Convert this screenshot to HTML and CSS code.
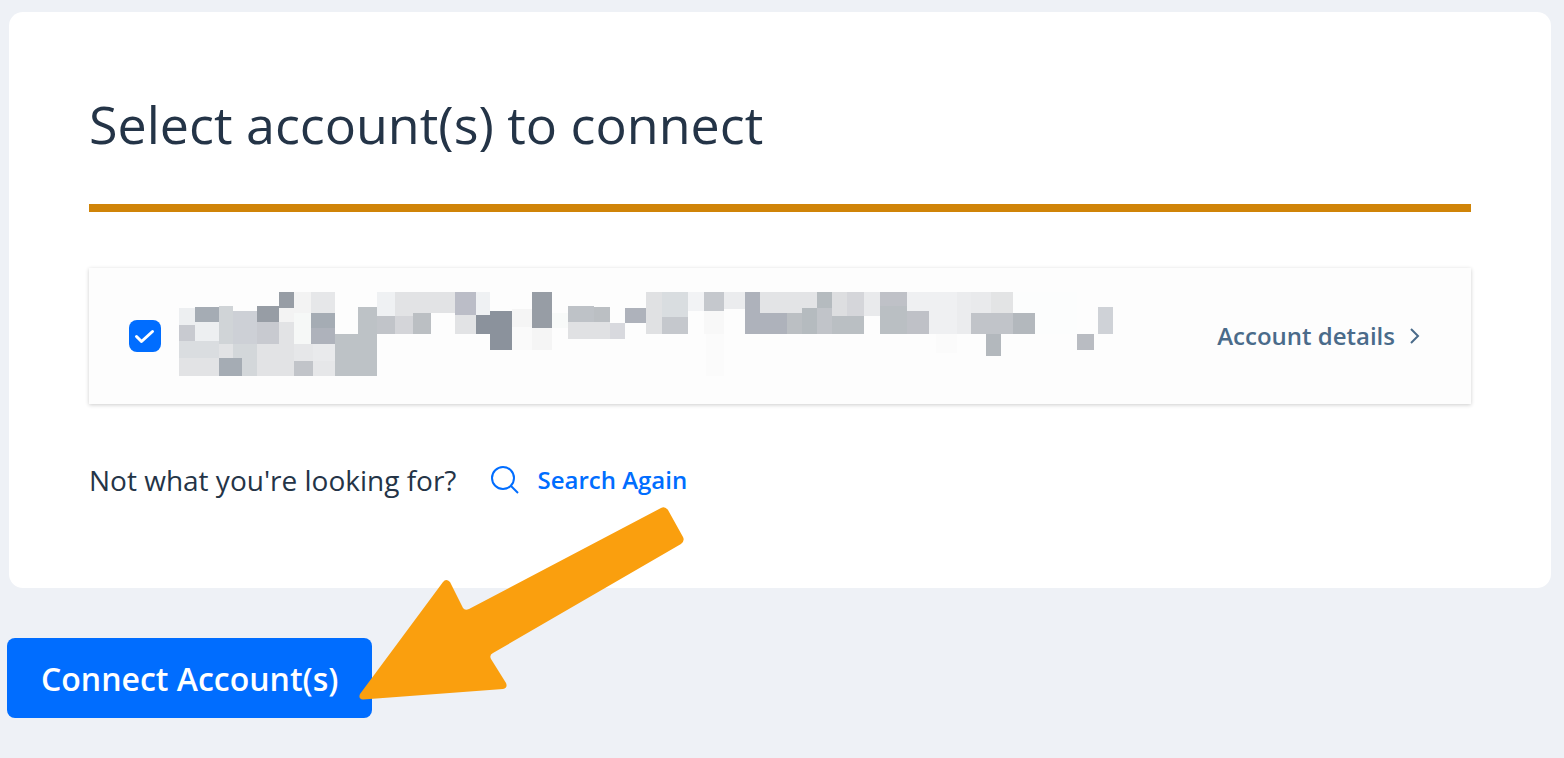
FILE: index.html
```html
<!DOCTYPE html>
<html lang="en">
<head>
<meta charset="utf-8">
<meta name="viewport" content="width=device-width, initial-scale=1">
<title>Select account(s) to connect</title>
<link rel="stylesheet" href="styles.css">
</head>
<body>
<main class="page">
  <section class="card">
    <h1 class="title">Select account(s) to connect</h1>
    <div class="account">
      <input class="account-check" type="checkbox" id="account" aria-label="Select account" checked>
      <label class="account-name" for="account">
        <svg class="mosaic" viewBox="0 0 934 88" shape-rendering="crispEdges" aria-hidden="true">
          <path fill="#edeff1" d="M0 16h16v17H0zM16 30h24v19H16z"/>
          <path fill="#a5acb4" d="M16 15h24v15H16zM132 21h24v15h-24zM40 66h23v18H40z"/>
          <path fill="#c8cad0" d="M0 33h16v16H0zM78 30h22v22H78z"/>
          <path fill="#dadde0" d="M0 49h40v17H0z"/>
          <path fill="#e2e3e5" d="M0 66h40v18H0zM40 52h14v14H40zM78 52h37v32H78zM100 30h15v22h-15z"/>
          <path fill="#d0d4d7" d="M40 14h14v38H40z"/>
          <path fill="#cdd0d6" d="M54 19h24v33H54z"/>
          <path fill="#d3d7da" d="M54 52h24v32H63V66h-9z"/>
          <path fill="#979da5" d="M78 14h22v16H78zM100 0h15v16h-15zM353 0h20v36h-20z"/>
          <path fill="#f3f3f3" d="M115 0h17v21h-17zM100 16h15v14h-15z"/>
          <path fill="#f6f8f7" d="M115 21h17v31h-17z"/>
          <path fill="#e6e7e9" d="M132 0h24v21h-24zM115 52h19v17h-19zM134 69h22v15h-22z"/>
          <path fill="#e9eaec" d="M134 52h22v17h-22z"/>
          <path fill="#aeb2bb" d="M132 36h24v16h-24zM446 16h21v15h-21zM566 0h15v21h27v21h-42z"/>
          <path fill="#c1c4c9" d="M115 69h19v15h-19zM198 24h18v18h-18zM638 16h15v26h-15zM792 21h42v21h-42z"/>
          <path fill="#bdc2c6" d="M179 15h19v69h-42V42h23z"/>
          <path fill="#eff1f3" d="M198 0h18v24h-18zM297 0h14v23h-14z"/>
          <path fill="#e2e3e5" d="M216 0h60v21h-42v3h-18zM276 23h21v19h-21z"/>
          <path fill="#d4d5d9" d="M216 24h18v18h-18z"/>
          <path fill="#bbbfc3" d="M234 21h18v21h-18zM415 15h16v15h-16zM608 21h15v21h-15z"/>
          <path fill="#bbbdc7" d="M276 0h21v23h-21z"/>
          <path fill="#8b929c" d="M297 23h14v-4h22v39h-22V42h-14z"/>
          <path fill="#f5f5f5" d="M333 17h20v18h-20zM353 36h20v22h-20z"/>
          <path fill="#fafafa" d="M333 35h20v23h-20z"/>
          <path fill="#f8faf9" d="M373 21h16v15h-16z"/>
          <path fill="#bec2c7" d="M389 14h26v16h-26z"/>
          <path fill="#e0e1e3" d="M389 30h42v17h-42zM467 0h16v42h-16z"/>
          <path fill="#d8d9de" d="M431 31h15v16h-15z"/>
          <path fill="#d9dde0" d="M483 0h26v25h-26z"/>
          <path fill="#c5c8cd" d="M483 25h26v17h-26zM525 0h20v19h-20z"/>
          <path fill="#f2f3f5" d="M509 0h16v19h-16z"/>
          <path fill="#f8f8f8" d="M525 19h20v23h-20z"/>
          <path fill="#fbfbfb" d="M527 42h18v42h-18zM757 42h21v19h-21z"/>
          <path fill="#ebecee" d="M545 0h21v17h-21z"/>
          <path fill="#e3e4e6" d="M581 0h57v16h-15v5h-42z"/>
          <path fill="#b5bbbf" d="M638 0h15v16h-15zM623 16h15v26h-15z"/>
          <path fill="#dddee0" d="M653 0h15v24h-15z"/>
          <path fill="#d5d6da" d="M668 0h17v24h-17z"/>
          <path fill="#e9eaec" d="M685 0h16v24h-16zM792 0h20v21h-20z"/>
          <path fill="#babfc3" d="M653 24h32v18h-32zM701 14h27v28h-27z"/>
          <path fill="#bfc1c7" d="M701 0h27v14h-27zM728 19h22v23h-22z"/>
          <path fill="#eff0f2" d="M728 0h50v42h-28V19h-22z"/>
          <path fill="#ebecee" d="M778 0h14v42h-14z"/>
          <path fill="#e3e4e5" d="M812 0h22v21h-22z"/>
          <path fill="#b3b8bd" d="M834 21h22v21h-22zM807 42h15v22h-15z"/>
          <path fill="#fcfdfd" d="M834 0h64v42h-42V21h-22z"/>
          <path fill="#b9bcc2" d="M898 42h17v16h-17z"/>
          <path fill="#cfd2d7" d="M919 15h15v27h-15z"/>
        </svg>
      </label>
      <a class="details" href="#details">Account details
        <svg class="chevron" viewBox="0 0 12 18" aria-hidden="true"><path d="M2 2l7 7-7 7"/></svg>
      </a>
    </div>
    <div class="retry">
      <span>Not what you're looking for?</span>
      <a class="search" href="#search">
        <svg class="search-icon" viewBox="0 0 30 30" aria-hidden="true"><circle cx="13" cy="13" r="11"/><path d="M21 21l7 7"/></svg>
        Search Again
      </a>
    </div>
  </section>
  <div class="actions">
    <button class="connect" type="button">Connect Account(s)</button>
    <svg class="arrow" viewBox="0 0 326 196" aria-hidden="true">
      <path d="M302 2Q306 0 309 4L324 31Q326 35 322 38L134 147Q130 149 132 153L147 177Q149 182 144 183L4 193.500Q-1 193 1 188L84 76Q87 72 91 76L104 102Q106 105 110 103Z"/>
    </svg>
  </div>
</main>
</body>
</html>
```
FILE: styles.css
```css
* {
  box-sizing: border-box;
}

body {
  margin: 0;
  background: #eef1f6;
  color: #243447;
  font-family: "Open Sans", "Noto Sans", sans-serif;
}

.page {
  padding: 12px 13px 40px 7px;
}

.card {
  margin-left: 2px;
  padding: 76px 80px 88px;
  border-radius: 14px;
  background: #fff;
}

.title {
  margin: 0 0 56px;
  padding-bottom: 44px;
  border-bottom: 8px solid #d08408;
  font-size: 52px;
  font-weight: 400;
  line-height: 72px;
}

.account {
  display: flex;
  align-items: center;
  height: 136px;
  padding: 0 50px 0 40px;
  background: #fdfdfd;
  box-shadow: 0 1px 4px rgba(0, 0, 0, 0.2);
}

.account-check {
  appearance: none;
  flex: none;
  width: 32px;
  height: 32px;
  margin: 0 18px 0 0;
  border-radius: 8px;
  background: #006dff url("data:image/svg+xml,%3Csvg xmlns='http://www.w3.org/2000/svg' viewBox='0 0 32 32'%3E%3Cpath d='M7.500 16.500l5 5L23.500 11.500' fill='none' stroke='white' stroke-width='3' stroke-linecap='round' stroke-linejoin='round'/%3E%3C/svg%3E");
}

.account-name {
  flex: 0 1 934px;
}

.mosaic {
  display: block;
  width: 100%;
}

.details {
  display: flex;
  align-items: center;
  gap: 14px;
  margin-left: auto;
  color: #4a6b8a;
  font-size: 24px;
  font-weight: 600;
  line-height: 32px;
  text-decoration: none;
  white-space: nowrap;
}

.chevron {
  width: 12px;
  height: 18px;
  fill: none;
  stroke: currentColor;
  stroke-width: 2;
}

.retry {
  display: flex;
  align-items: center;
  gap: 34px;
  margin-top: 56px;
  font-size: 28px;
  line-height: 40px;
}

.search {
  display: flex;
  align-items: center;
  gap: 17px;
  color: #006dff;
  font-size: 24px;
  font-weight: 600;
  text-decoration: none;
}

.search-icon {
  width: 30px;
  height: 30px;
  fill: none;
  stroke: currentColor;
  stroke-width: 2;
}

.actions {
  position: relative;
  margin-top: 50px;
}

.connect {
  height: 80px;
  padding: 0 34px;
  border: 0;
  border-radius: 8px;
  background: #006dff;
  color: #fff;
  font: 600 32px "Open Sans", "Noto Sans", sans-serif;
}

.arrow {
  position: absolute;
  top: -132px;
  left: 352px;
  width: 326px;
  height: 196px;
  fill: #fa9f0e;
}
```
